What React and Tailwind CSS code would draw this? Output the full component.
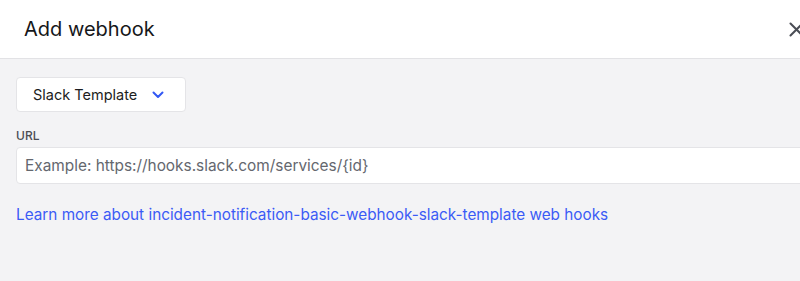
import { useState } from 'react';

function ChevronDown() {
  return (
    <svg width="12" height="8" viewBox="0 0 12 8" fill="none" className="text-[#3358f4]">
      <path d="M1.5 1.5L6 6L10.5 1.5" stroke="currentColor" strokeWidth="2" strokeLinecap="round" strokeLinejoin="round" />
    </svg>
  );
}

function CloseIcon() {
  return (
    <svg width="15" height="15" viewBox="0 0 15 15" fill="none" className="text-[#4a4d55]">
      <path d="M1.5 1.5L13.5 13.5M13.5 1.5L1.5 13.5" stroke="currentColor" strokeWidth="2" strokeLinecap="round" />
    </svg>
  );
}

export default function App() {
  const [url, setUrl] = useState('');
  const templateName = 'incident-notification-basic-webhook-slack-template';

  return (
    <div className="h-[281px] w-full overflow-hidden bg-[#f3f3f5] font-['Inter',sans-serif]">
      <div className="w-[832px]">
        <header className="flex h-[59px] items-center justify-between border-b border-[#e2e2e5] bg-white pl-6 pr-6">
          <h2 className="text-[20px] leading-7 text-[#16171a]">Add webhook</h2>
          <button type="button" className="flex h-6 w-6 items-center justify-center">
            <CloseIcon />
          </button>
        </header>

        <div className="px-4 pt-[18px]">
          <button
            type="button"
            className="flex h-[35px] w-[170px] items-center gap-[15px] rounded border border-[#e4e4e7] bg-white pl-4 text-[14.5px] text-[#1c1d21]"
          >
            <span>Slack Template</span>
            <ChevronDown />
          </button>

          <label className="mt-4 mb-[3px] block text-xs leading-4 font-medium text-[#4a4c53]">URL</label>
          <input
            type="text"
            value={url}
            onChange={(e) => setUrl(e.target.value)}
            placeholder="Example: https://hooks.slack.com/services/{id}"
            className="block h-[37px] w-full rounded border border-[#e4e4e7] bg-white px-2 text-[15.4px] text-[#1c1d21] placeholder:text-[#64676e] focus:outline-none"
          />

          <a href="#" className="mt-[19px] block text-[15.3px] leading-6 text-[#3b5bf6]">
            Learn more about {templateName} web hooks
          </a>
        </div>
      </div>
    </div>
  );
}
